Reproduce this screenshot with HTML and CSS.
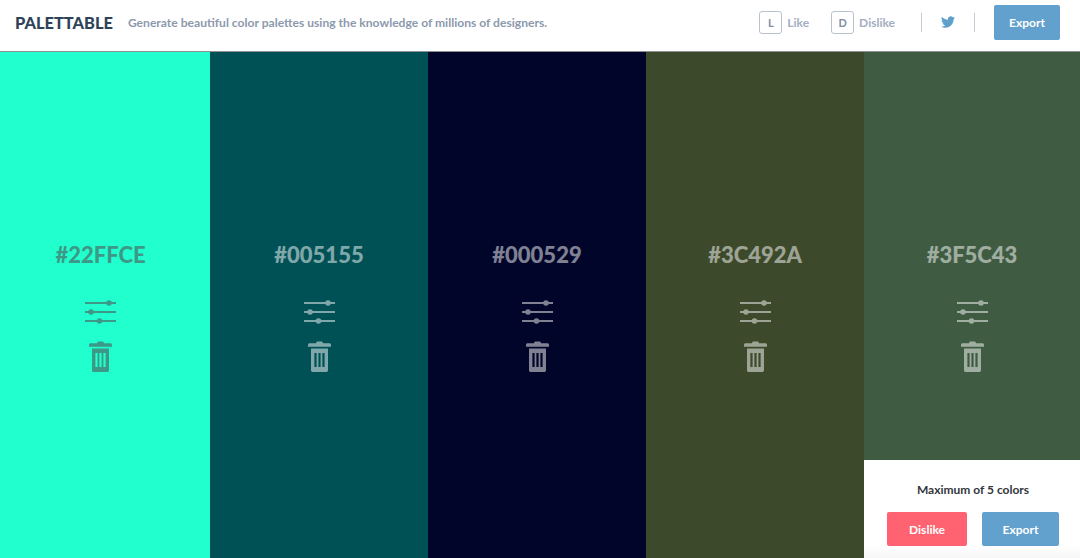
FILE: index.html
```html
<!DOCTYPE html>
<html lang="en">
  <head>
    <meta charset="UTF-8" />
    <meta name="viewport" content="width=device-width, initial-scale=1.0" />
    <title>Palettable</title>
    <link rel="stylesheet" href="styles.css">
  </head>
  <body>
    <svg class="sprites" width="0" height="0" aria-hidden="true">
      <symbol id="sliders" viewBox="0 0 31 24">
        <path d="M0 3h31M0 12h31M0 21h31" fill="none" stroke="currentColor" stroke-width="2" />
        <circle cx="24" cy="3" r="2.8" fill="currentColor" />
        <circle cx="6" cy="12" r="2.8" fill="currentColor" />
        <circle cx="14.500" cy="21" r="2.8" fill="currentColor" />
      </symbol>
      <symbol id="trash" viewBox="0 0 23 31">
        <path fill="currentColor" fill-rule="evenodd" d="M8 2.2C8 1 8.8.5 9.800.5h3.400c1 0 1.800.5 1.800 1.700h6.500c.8 0 1.500.7 1.500 1.500v2.100H0V3.700c0-.8.7-1.500 1.500-1.500zM3 7.500h17v21.700c0 1-.8 1.800-1.800 1.800H4.800c-1 0-1.800-.8-1.800-1.800zM6.400 12v14h2.200V12zM10.400 12v14h2.200V12zM14.400 12v14h2.200V12z" />
      </symbol>
    </svg>

    <header class="topbar">
      <div class="brand">
        <span class="logo">PALETTABLE</span>
        <span class="tagline">Generate beautiful color palettes using the knowledge of millions of designers.</span>
      </div>
      <nav class="actions">
        <div class="shortcut"><span class="key">L</span>Like</div>
        <div class="shortcut shortcut-last"><span class="key">D</span>Dislike</div>
        <span class="divider"></span>
        <svg class="twitter" viewBox="0 0 24 24" width="14" height="14">
          <path fill="currentColor" d="M23.950 4.570a10 10 0 0 1-2.820.770 4.960 4.960 0 0 0 2.160-2.720c-.950.550-2 .960-3.130 1.190a4.920 4.920 0 0 0-8.380 4.480C7.690 8.100 4.070 6.130 1.640 3.160a4.820 4.820 0 0 0-.660 2.470c0 1.710.870 3.210 2.190 4.100a4.900 4.900 0 0 1-2.230-.620v.060a4.920 4.920 0 0 0 3.950 4.830 5 5 0 0 1-2.210.080 4.940 4.940 0 0 0 4.600 3.420A9.870 9.870 0 0 1 0 19.540a14 14 0 0 0 7.560 2.210c9.050 0 14-7.500 14-13.980 0-.210 0-.420-.020-.630a9.940 9.940 0 0 0 2.410-2.570z" />
        </svg>
        <span class="divider"></span>
        <button class="btn btn-export btn-top">Export</button>
      </nav>
    </header>

    <main class="palette">
      <section class="swatch swatch-first" style="background: #22ffce">
        <h2 class="hex">#22FFCE</h2>
        <svg class="icon-sliders"><use href="#sliders" /></svg>
        <svg class="icon-trash"><use href="#trash" /></svg>
      </section>
      <section class="swatch" style="background: #005155">
        <h2 class="hex">#005155</h2>
        <svg class="icon-sliders"><use href="#sliders" /></svg>
        <svg class="icon-trash"><use href="#trash" /></svg>
      </section>
      <section class="swatch" style="background: #000529">
        <h2 class="hex">#000529</h2>
        <svg class="icon-sliders"><use href="#sliders" /></svg>
        <svg class="icon-trash"><use href="#trash" /></svg>
      </section>
      <section class="swatch" style="background: #3c492a">
        <h2 class="hex">#3C492A</h2>
        <svg class="icon-sliders"><use href="#sliders" /></svg>
        <svg class="icon-trash"><use href="#trash" /></svg>
      </section>
      <section class="swatch swatch-last" style="background: #3f5c43">
        <h2 class="hex">#3F5C43</h2>
        <svg class="icon-sliders"><use href="#sliders" /></svg>
        <svg class="icon-trash"><use href="#trash" /></svg>
      </section>

      <aside class="limit-box">
        <p>Maximum of 5 colors</p>
        <div class="limit-buttons">
          <button class="btn btn-dislike">Dislike</button>
          <button class="btn btn-export">Export</button>
        </div>
      </aside>
    </main>
  </body>
</html>
```

FILE: styles.css
```css
* {
  box-sizing: border-box;
}

body {
  margin: 0;
  height: 100vh;
  display: flex;
  flex-direction: column;
  overflow: hidden;
  background: #fff;
  font-family: Lato, "Open Sans", sans-serif;
}

.sprites {
  position: absolute;
}

/* Top bar */
.topbar {
  height: 52px;
  flex: none;
  display: flex;
  justify-content: space-between;
  align-items: center;
  padding: 0 20px 6px 15px;
  border-bottom: 1px solid #8d9296;
}

.brand {
  display: flex;
  align-items: center;
  gap: 15px;
}

.logo {
  font-size: 16.4px;
  font-weight: 900;
  color: #2f4358;
}

.tagline {
  font-size: 12.1px;
  font-weight: 700;
  color: #8c99ad;
}

.actions {
  display: flex;
  align-items: center;
}

.shortcut {
  display: flex;
  align-items: center;
  gap: 5px;
  margin-right: 22px;
  font-size: 12px;
  font-weight: 700;
  color: #a3aebf;
}

.shortcut-last {
  margin-right: 26px;
}

.key {
  width: 23px;
  height: 23px;
  display: flex;
  align-items: center;
  justify-content: center;
  border: 1px solid #b9c2cf;
  border-radius: 3px;
  font-size: 11px;
  color: #7f8da3;
}

.divider {
  width: 1px;
  height: 19px;
  background: #c5ccd6;
}

.twitter {
  margin: 0 19px 2px;
  color: #5f9fcc;
}

/* Buttons */
.btn {
  border: none;
  border-radius: 2px;
  height: 34px;
  font-family: inherit;
  font-size: 12px;
  font-weight: 700;
  color: #fff;
  cursor: pointer;
}

.btn-export {
  width: 77px;
  background: #62a0cd;
}

.btn-dislike {
  width: 80px;
  background: #ff6372;
}

.btn-top {
  width: 66px;
  height: 35px;
  margin-left: 19px;
}

/* Colour columns */
.palette {
  flex: 1;
  position: relative;
  display: flex;
}

.swatch {
  width: 218px;
  display: flex;
  flex-direction: column;
  align-items: center;
  padding-top: 187px;
  color: #fff;
}

.swatch-first {
  width: 210px;
  padding-right: 9px;
  color: #4f5758;
}

.swatch-last {
  width: 216px;
}

.hex {
  margin: 0 0 29px;
  font-size: 22px;
  line-height: 32px;
  font-weight: 900;
  opacity: 0.5;
}

.icon-sliders {
  width: 31px;
  height: 24px;
  margin-bottom: 17px;
  opacity: 0.5;
}

.icon-trash {
  width: 23px;
  height: 31px;
  opacity: 0.5;
}

.swatch-first .hex,
.swatch-first .icon-sliders,
.swatch-first .icon-trash {
  opacity: 0.6;
}

/* Notice over the last column */
.limit-box {
  position: absolute;
  right: 0;
  bottom: 0;
  width: 216px;
  height: 98px;
  display: flex;
  flex-direction: column;
  align-items: center;
  padding-left: 2px;
  background: linear-gradient(#fff 88%, #f6f6f6);
}

.limit-box p {
  margin: 23px 0 15px;
  font-size: 12px;
  line-height: 14px;
  font-weight: 700;
  color: #33373d;
}

.limit-buttons {
  display: flex;
  gap: 15px;
}
```
